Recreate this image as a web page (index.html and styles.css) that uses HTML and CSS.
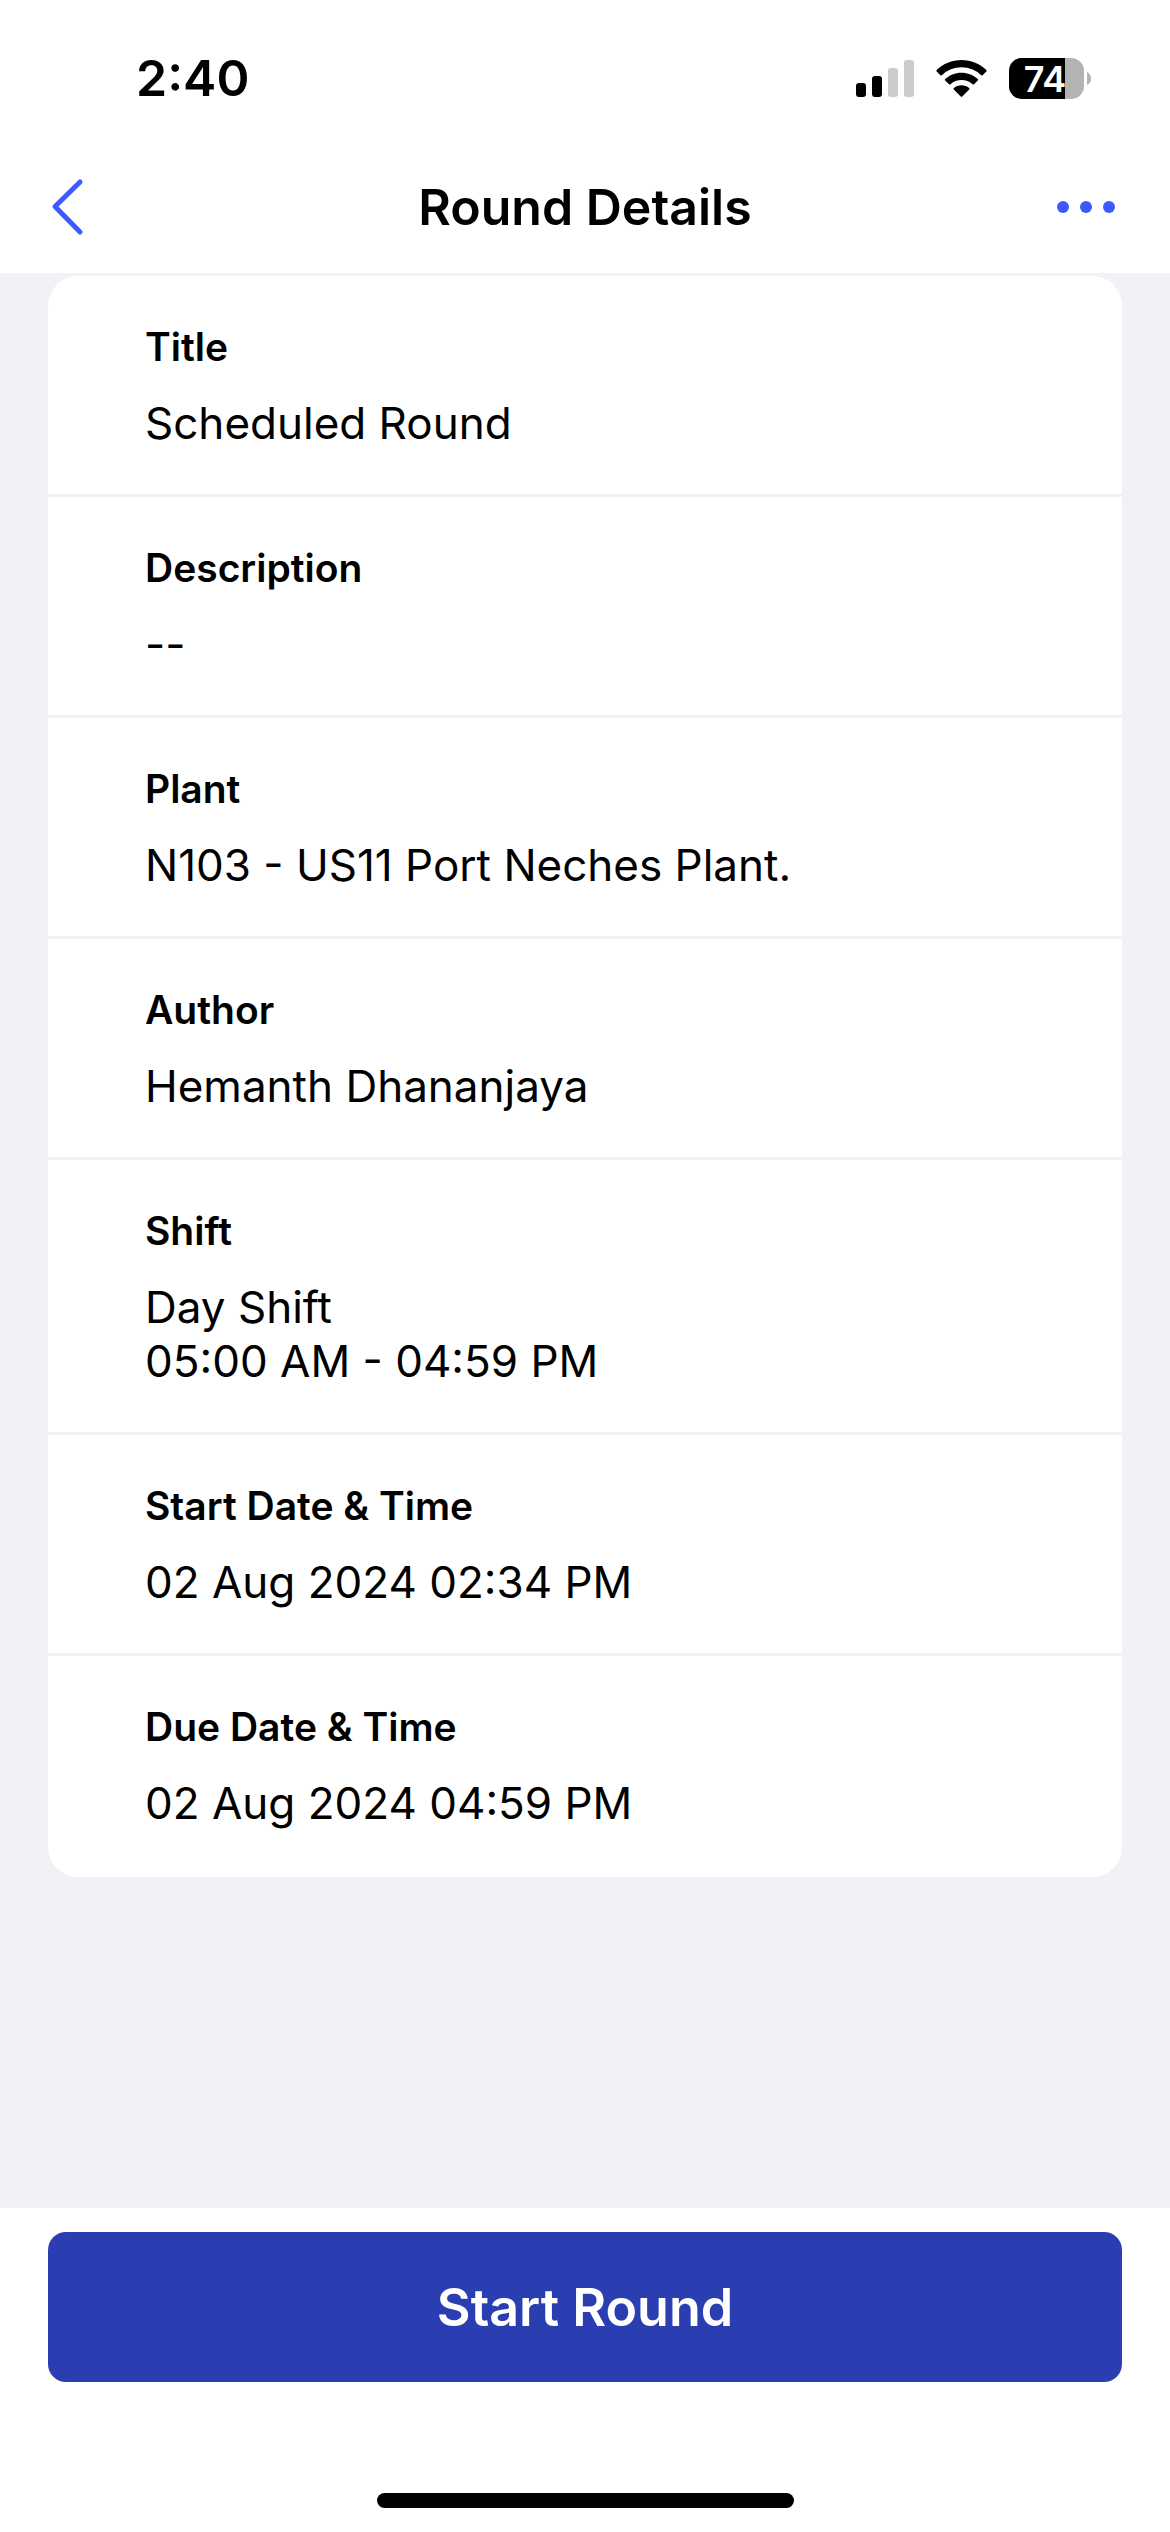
FILE: index.html
```html
<!DOCTYPE html>
<html lang="en">
<head>
    <meta charset="UTF-8">
    <meta name="viewport" content="width=device-width, initial-scale=1.0">
    <title>Round Details</title>
    <link rel="stylesheet" href="styles.css">
</head>
<body>
    <div class="status-bar">
        <span class="time">2:40</span>
        <div class="status-icons">
            <svg width="58" height="37" viewBox="0 0 58 37" aria-hidden="true">
                <rect x="0" y="23" width="10" height="14" rx="3" />
                <rect x="16" y="16" width="10" height="21" rx="3" />
                <rect x="32" y="8" width="10" height="29" rx="3" fill="#ccc" />
                <rect x="48" y="0" width="10" height="37" rx="3" fill="#ccc" />
            </svg>
            <svg width="51" height="37" viewBox="0 0 51 37" aria-hidden="true">
                <path d="M25.5 0C35 0 43.8 3.7 50.3 10Q51 10.8 50.3 11.5L46.6 15.2Q45.9 15.9 45.2 15.2A28.5 28.5 0 0 0 5.800 15.2Q5.1 15.9 4.4 15.2L.7 11.5Q0 10.8 .7 10C7.2 3.7 16 0 25.5 0Z" />
                <path d="M25.5 12.7C31.8 12.7 37.5 15.1 41.8 19Q42.5 19.7 41.8 20.4L38 24.2Q37.3 24.9 36.5 24.2A16.5 16.5 0 0 0 14.5 24.2Q13.7 24.9 13 24.2L9.2 20.4Q8.5 19.7 9.2 19C13.5 15.1 19.2 12.7 25.5 12.7Z" />
                <path d="M25.5 25.3C28.4 25.3 31.1 26.3 33.1 28.1Q33.9 28.8 33.2 29.5L26.3 36.4Q25.5 37.1 24.7 36.4L17.8 29.5Q17.1 28.8 17.9 28.1C19.9 26.3 22.6 25.3 25.5 25.3Z" />
            </svg>
            <svg class="battery" width="82" height="41" viewBox="0 0 82 41" role="img" aria-label="Battery 74%">
                <rect x="0" y="0" width="75" height="41" rx="13" fill="#b3b3b3" />
                <path d="M13 0H56V41H13A13 13 0 0 1 0 28V13A13 13 0 0 1 13 0Z" />
                <path d="M78 14Q82 16 82 20.5T78 27Z" fill="#b3b3b3" />
                <text x="36" y="34" text-anchor="middle" fill="#fff">74</text>
            </svg>
        </div>
    </div>

    <header class="header">
        <button class="icon-btn" type="button" aria-label="Back">
            <svg width="38" height="60" viewBox="0 0 38 60">
                <path d="M32 5L7 29.5L32 55" fill="none" stroke="#3d5afe" stroke-width="5" stroke-linecap="round" stroke-linejoin="round" />
            </svg>
        </button>
        <h1>Round Details</h1>
        <button class="icon-btn more" type="button" aria-label="More options">
            <svg width="68" height="60" viewBox="0 0 68 60" fill="#3d5afe">
                <circle cx="9" cy="30" r="6" />
                <circle cx="32" cy="30" r="6" />
                <circle cx="55" cy="30" r="6" />
            </svg>
        </button>
    </header>

    <main class="content">
        <dl class="card">
            <div class="row">
                <dt>Title</dt>
                <dd>Scheduled Round</dd>
            </div>
            <div class="row">
                <dt>Description</dt>
                <dd>--</dd>
            </div>
            <div class="row">
                <dt>Plant</dt>
                <dd>N103 - US11 Port Neches Plant.</dd>
            </div>
            <div class="row">
                <dt>Author</dt>
                <dd>Hemanth Dhananjaya</dd>
            </div>
            <div class="row">
                <dt>Shift</dt>
                <dd>Day Shift<br>05:00 AM - 04:59 PM</dd>
            </div>
            <div class="row">
                <dt>Start Date &amp; Time</dt>
                <dd>02 Aug 2024 02:34 PM</dd>
            </div>
            <div class="row">
                <dt>Due Date &amp; Time</dt>
                <dd>02 Aug 2024 04:59 PM</dd>
            </div>
        </dl>
    </main>

    <footer class="footer">
        <button class="start-btn" type="button">Start Round</button>
        <div class="home-indicator"></div>
    </footer>
</body>
</html>
```
FILE: styles.css
```css
* {
    box-sizing: border-box;
}
body {
    margin: 0;
    min-height: 100vh;
    display: flex;
    flex-direction: column;
    font-family: Inter, "Liberation Sans", sans-serif;
    color: #000;
    background: #f2f1f6;
}
button {
    font-family: inherit;
    border: none;
    cursor: pointer;
}
svg {
    display: block;
}

/* status bar */
.status-bar {
    display: flex;
    justify-content: space-between;
    align-items: center;
    height: 141px;
    padding: 15px 79px 0 136px;
    background: #fff;
}
.time {
    font-size: 50px;
    line-height: 60px;
    font-weight: 600;
}
.status-icons {
    display: flex;
    align-items: center;
    gap: 22px;
}
.battery {
    overflow: visible;
}
.battery text {
    font-size: 36px;
    font-weight: 600;
}

/* header */
.header {
    display: grid;
    grid-template-columns: 1fr auto 1fr;
    align-items: center;
    height: 132px;
    padding: 0 48px;
    background: #fff;
}
.header h1 {
    margin: 0;
    font-size: 50px;
    line-height: 60px;
    font-weight: 600;
}
.icon-btn {
    justify-self: start;
    padding: 0;
    background: none;
}
.more {
    justify-self: end;
}

/* details */
.content {
    flex: 1;
    padding: 3px 48px 48px;
}
.card {
    margin: 0;
    background: #fff;
    border-radius: 30px;
    overflow: hidden;
}
.row {
    padding: 47px 97px 44px;
    border-bottom: 3px solid #f2f1f6;
}
.row:last-child {
    border-bottom-color: #fff;
}
.row dt {
    margin-bottom: 26px;
    font-size: 39px;
    line-height: 47px;
    font-weight: 600;
}
.row dd {
    margin: 0;
    font-size: 44px;
    line-height: 54px;
}

/* footer */
.footer {
    padding: 24px 48px;
    background: #fff;
}
.start-btn {
    display: block;
    width: 100%;
    height: 150px;
    border-radius: 18px;
    background: #2a3eb1;
    color: #fff;
    font-size: 52px;
    font-weight: 600;
}
.home-indicator {
    width: 417px;
    height: 15px;
    margin: 111px auto 0;
    border-radius: 8px;
    background: #000;
}
```
